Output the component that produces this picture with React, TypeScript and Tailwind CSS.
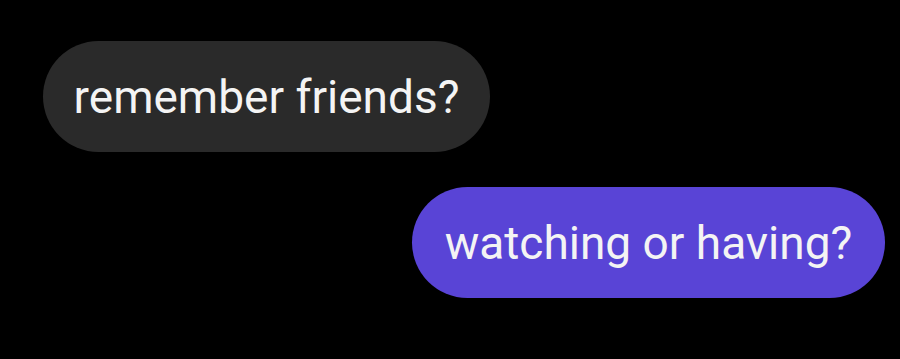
export default function App() {
  return (
    <div className="w-[900px] h-[359px] bg-black flex flex-col pt-[41px] pl-[43px] pr-[15px] gap-[35px] font-['Roboto',sans-serif]">
      <div className="self-start h-[111px] w-[447px] rounded-full bg-[#2a2a2a] flex items-center justify-center">
        <span className="text-[#f4f4f4] text-[46px] leading-none">remember friends?</span>
      </div>
      <div className="self-end h-[111px] w-[473px] rounded-full bg-[#5944d6] flex items-center justify-center">
        <span className="text-[#f4f4f4] text-[46px] leading-none">watching or having?</span>
      </div>
    </div>
  );
}
